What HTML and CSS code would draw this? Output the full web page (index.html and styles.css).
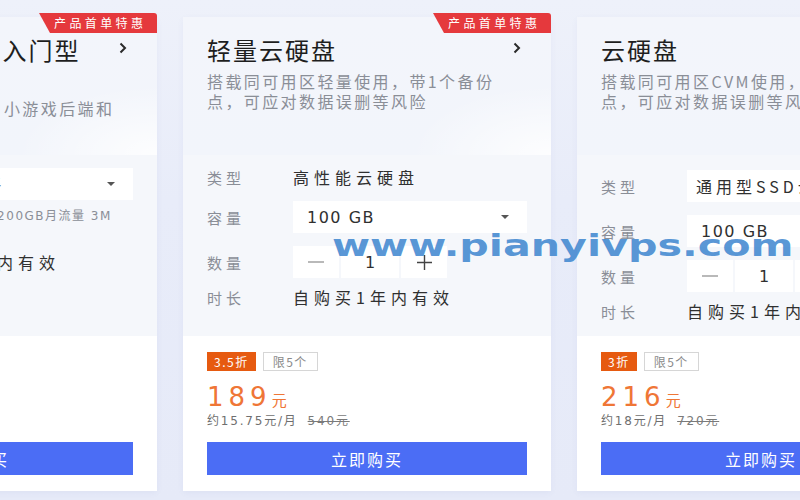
FILE: index.html
```html
<!DOCTYPE html>
<html lang="zh-CN">
<head>
<meta charset="utf-8">
<title>云硬盘</title>
<link rel="stylesheet" href="styles.css">
</head>
<body>
<div class="page">
  <div class="track">
    <section class="card">
      <span class="badge">产品首单特惠</span>
      <div class="head">
        <div class="title-row">
          <h2 class="title">轻量应用服务器 入门型</h2>
          <svg class="chev" viewBox="0 0 8 12"><path d="M1.5 1.5 L6 6 L1.5 10.5"/></svg>
        </div>
        <p class="desc desc-left">适合个人开发者<br>适用于个人官网、H5、小游戏后端和</p>
      </div>
      <div class="config config-left">
        <div class="row"><span class="label">套餐</span><div class="select"><span class="select-text">2核2G套餐</span><span class="caret"></span></div></div>
        <div class="note">系统盘40GB， 200GB月流量 3M</div>
        <div class="row row-text row-far"><span class="label">时长</span><span class="value">自购买1年内有效</span></div>
      </div>
      <div class="buy">
        <div class="tags"><span class="tag tag-off">2.5折</span><span class="tag tag-limit">限1个</span></div>
        <div class="price"><span class="price-num">99</span><span class="price-unit">元</span></div>
        <div class="per">约8.25元/月<span class="orig">396元</span></div>
        <button class="btn">立即购买</button>
      </div>
    </section>

    <section class="card">
      <span class="badge">产品首单特惠</span>
      <div class="head">
        <div class="title-row">
          <h2 class="title">轻量云硬盘</h2>
          <svg class="chev" viewBox="0 0 8 12"><path d="M1.5 1.5 L6 6 L1.5 10.5"/></svg>
        </div>
        <p class="desc">搭载同可用区轻量使用，带1个备份点，可应对数据误删等风险</p>
      </div>
      <div class="config config-mid">
        <div class="row row-text"><span class="label">类型</span><span class="value">高性能云硬盘</span></div>
        <div class="row"><span class="label">容量</span><div class="select"><span class="select-text">100 GB</span><span class="caret"></span></div></div>
        <div class="row"><span class="label">数量</span>
          <div class="stepper">
            <span class="step"><svg class="ico-minus" viewBox="0 0 16 2"><path d="M0 1 H16"/></svg></span>
            <span class="step step-num">1</span>
            <span class="step"><svg class="ico-plus" viewBox="0 0 15 15"><path d="M0 7.5 H15 M7.5 0 V15"/></svg></span>
          </div>
        </div>
        <div class="row row-text row-last"><span class="label">时长</span><span class="value">自购买1年内有效</span></div>
      </div>
      <div class="buy">
        <div class="tags"><span class="tag tag-off">3.5折</span><span class="tag tag-limit">限5个</span></div>
        <div class="price"><span class="price-num">189</span><span class="price-unit">元</span></div>
        <div class="per">约15.75元/月<span class="orig">540元</span></div>
        <button class="btn">立即购买</button>
      </div>
    </section>

    <section class="card">
      <span class="badge">产品首单特惠</span>
      <div class="head">
        <div class="title-row">
          <h2 class="title">云硬盘</h2>
          <svg class="chev" viewBox="0 0 8 12"><path d="M1.5 1.5 L6 6 L1.5 10.5"/></svg>
        </div>
        <p class="desc">搭载同可用区CVM使用，带1个备份点，可应对数据误删等风险</p>
      </div>
      <div class="config config-right">
        <div class="row"><span class="label">类型</span><div class="box">通用型SSD云硬盘</div></div>
        <div class="row"><span class="label">容量</span><div class="select"><span class="select-text">100 GB</span><span class="caret"></span></div></div>
        <div class="row"><span class="label">数量</span>
          <div class="stepper">
            <span class="step"><svg class="ico-minus" viewBox="0 0 16 2"><path d="M0 1 H16"/></svg></span>
            <span class="step step-num">1</span>
            <span class="step"><svg class="ico-plus" viewBox="0 0 15 15"><path d="M0 7.5 H15 M7.5 0 V15"/></svg></span>
          </div>
        </div>
        <div class="row row-text row-last"><span class="label">时长</span><span class="value">自购买1年内有效</span></div>
      </div>
      <div class="buy">
        <div class="tags"><span class="tag tag-off">3折</span><span class="tag tag-limit">限5个</span></div>
        <div class="price"><span class="price-num">216</span><span class="price-unit">元</span></div>
        <div class="per">约18元/月<span class="orig">720元</span></div>
        <button class="btn">立即购买</button>
      </div>
    </section>
  </div>
  <div class="watermark">www.pianyivps.com</div>
</div>
</body>
</html>
```

FILE: styles.css
```css
* {
  box-sizing: border-box;
  margin: 0;
  padding: 0;
}

body {
  width: 800px;
  height: 500px;
  overflow: hidden;
  background: #e8ecf8;
  font-family: "Noto Sans CJK SC", sans-serif;
  color: #333;
}

.page {
  position: relative;
  height: 500px;
  overflow: hidden;
  background: linear-gradient(180deg, #eef1fa 0%, #e8ecf9 40%, #e6eaf8 100%);
}

.track {
  display: flex;
  gap: 26px;
  width: max-content;
  padding-top: 17px;
  margin-left: -211px;
}

.card {
  position: relative;
  width: 368px;
  height: 474px;
  display: flex;
  flex-direction: column;
  background: #fff;
  border-radius: 2px;
  box-shadow: 0 2px 6px rgba(90, 110, 170, 0.06);
}

.badge {
  position: absolute;
  top: -4px;
  right: 0;
  width: 118px;
  height: 20px;
  padding-left: 15px;
  background: #e5393d;
  color: #fff;
  font-size: 12px;
  line-height: 20px;
  letter-spacing: 3.4px;
  white-space: nowrap;
  border-top-right-radius: 3px;
  clip-path: polygon(0 0, 100% 0, 100% 100%, 11px 100%);
}

.head {
  height: 138px;
  padding: 18px 30px 0 24px;
  background:
    radial-gradient(ellipse 140px 70px at 100% 100%, rgba(255, 255, 255, 0.85), rgba(255, 255, 255, 0) 100%),
    linear-gradient(180deg, #f3f5fb 0%, #f2f5fb 100%);
}

.title-row {
  display: flex;
  justify-content: space-between;
  align-items: center;
  height: 30px;
}

.title {
  font-size: 24px;
  font-weight: 400;
  line-height: 30px;
  letter-spacing: 2px;
  color: #1e1e1e;
  white-space: nowrap;
}

.chev {
  width: 8px;
  height: 12px;
  margin-top: -4px;
  flex: none;
}

.chev path {
  fill: none;
  stroke: #2a2a2a;
  stroke-width: 2;
}

.desc {
  margin-top: 6px;
  max-width: 300px;
  font-size: 16px;
  line-height: 20px;
  letter-spacing: 2.4px;
  color: #8a8e97;
}

.desc-left {
  max-width: none;
  white-space: nowrap;
  margin-top: 13px;
}

.config {
  height: 181px;
  padding: 11px 24px 0;
  background: #f5f7fb;
}

.config-right {
  padding-top: 15px;
}

.config-left {
  padding-top: 13px;
}

.row {
  display: flex;
  align-items: center;
  height: 32px;
  margin-top: 13px;
}

.row:first-child {
  margin-top: 0;
}

.row-text {
  height: 22px;
}

.row-last {
  margin-top: 8px;
}

.row-far {
  margin-top: 27px;
}

.label {
  width: 86px;
  flex: none;
  font-size: 15px;
  letter-spacing: 4px;
  color: #8a8e97;
  white-space: nowrap;
}

.value {
  font-size: 16px;
  letter-spacing: 5px;
  color: #303030;
  white-space: nowrap;
}

.select {
  flex: 1;
  height: 32px;
  display: flex;
  align-items: center;
  justify-content: space-between;
  padding: 0 18px 0 14px;
  background: #fff;
}

.select-text {
  font-family: "DejaVu Sans", "Noto Sans CJK SC", sans-serif;
  font-size: 16px;
  letter-spacing: 1.5px;
  color: #303030;
  white-space: nowrap;
}

.caret {
  width: 0;
  height: 0;
  border-left: 4px solid transparent;
  border-right: 4px solid transparent;
  border-top: 4px solid #555;
}

.box {
  flex: 1;
  height: 32px;
  display: flex;
  align-items: center;
  padding-left: 9px;
  background: #fff;
  font-size: 16px;
  letter-spacing: 4px;
  color: #303030;
  white-space: nowrap;
}

.note {
  margin: 8px 0 0 86px;
  height: 16px;
  line-height: 16px;
  font-family: "DejaVu Sans", "Noto Sans CJK SC", sans-serif;
  font-size: 12px;
  letter-spacing: 1.5px;
  color: #8a8e97;
  white-space: nowrap;
}

.stepper {
  display: flex;
  gap: 2px;
}

.step {
  width: 46px;
  height: 32px;
  display: flex;
  align-items: center;
  justify-content: center;
  background: #fff;
}

.step-num {
  width: 58px;
  font-family: "DejaVu Sans", sans-serif;
  font-size: 16px;
  color: #303030;
}

.ico-minus {
  width: 16px;
  height: 2px;
}

.ico-minus path {
  stroke: #8a8a8a;
  stroke-width: 1.2;
}

.ico-plus {
  width: 15px;
  height: 15px;
}

.ico-plus path {
  fill: none;
  stroke: #444;
  stroke-width: 1.4;
}

.buy {
  flex: 1;
  padding: 16px 24px 0;
  background: #fff;
}

.tags {
  display: flex;
  gap: 7px;
  height: 19px;
}

.tag {
  height: 19px;
  padding: 0 7px;
  font-size: 12px;
  line-height: 19px;
  letter-spacing: 1.5px;
  white-space: nowrap;
}

.tag-off {
  background: #e65a10;
  color: #fff;
}

.tag-limit {
  padding: 0 9px;
  line-height: 17px;
  border: 1px solid #d6d6d6;
  color: #8a8a8a;
}

.price {
  margin-top: 11px;
  height: 30px;
  line-height: 30px;
  color: #ef7636;
  white-space: nowrap;
  overflow: hidden;
}

.price-num {
  font-family: "DejaVu Sans", sans-serif;
  font-size: 26px;
  letter-spacing: 5px;
}

.price-unit {
  font-size: 15px;
  line-height: 15px;
}

.per {
  height: 18px;
  line-height: 18px;
  font-family: "DejaVu Sans", "Noto Sans CJK SC", sans-serif;
  font-size: 12px;
  letter-spacing: 1.8px;
  color: #6f6f6f;
  white-space: nowrap;
  overflow: hidden;
}

.orig {
  margin-left: 10px;
  text-decoration: line-through;
  color: #7a7a7a;
}

.btn {
  display: block;
  width: 100%;
  height: 33px;
  margin-top: 12px;
  border: 0;
  background: #4b6df5;
  color: #fff;
  font-family: "Noto Sans CJK SC", sans-serif;
  font-size: 16px;
  letter-spacing: 2px;
}

.watermark {
  position: absolute;
  left: 332px;
  top: 230px;
  font-family: "DejaVu Sans", sans-serif;
  font-weight: 700;
  font-size: 31px;
  line-height: 31px;
  color: rgba(52, 128, 205, 0.82);
  white-space: nowrap;
  transform: scaleX(1.33);
  transform-origin: left top;
}
```
